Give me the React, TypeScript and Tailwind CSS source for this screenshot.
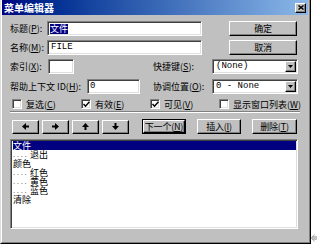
import React from "react";

const raised =
  "border border-t-white border-l-white border-r-black border-b-black shadow-[inset_-1px_-1px_#808080]";
const sunken =
  "border border-t-[#808080] border-l-[#808080] border-r-white border-b-white shadow-[inset_1px_1px_#404040,inset_-1px_-1px_#dfdfdf]";

const U = ({ c }: { c: string }) => <span className="underline underline-offset-1">{c}</span>;

function Check({ checked }: { checked: boolean }) {
  return (
    <div className={`w-[10px] h-[10px] bg-white ${sunken} flex items-center justify-center`}>
      {checked && (
        <svg width="7" height="7" viewBox="0 0 7 7">
          <path d="M0.5 3 L2.5 5.2 L6.5 0.8" stroke="#000" strokeWidth="1.5" fill="none" />
        </svg>
      )}
    </div>
  );
}

function Select({ value }: { value: string }) {
  return (
    <div className={`w-[86px] h-[15px] bg-white ${sunken} flex items-center pl-[3px]`}>
      <span className="flex-1 font-['Liberation_Mono',monospace] text-[9px] leading-[9px] text-black whitespace-pre">{value}</span>
      <div className={`w-[11px] h-[11px] mr-[1px] bg-[#c0c0c0] ${raised} flex items-center justify-center`}>
        <svg width="5" height="3" viewBox="0 0 5 3">
          <path d="M0 0 H5 L2.5 3 Z" fill="#000" />
        </svg>
      </div>
    </div>
  );
}

function Arrow({ dir }: { dir: "l" | "r" | "u" | "d" }) {
  const rot = { l: 180, r: 0, u: -90, d: 90 }[dir];
  return (
    <div className={`w-[27px] h-[14px] bg-[#c0c0c0] ${raised} flex items-center justify-center`}>
      <svg width="7" height="7" viewBox="0 0 7 7" style={{ transform: `rotate(${rot}deg)` }}>
        <path d="M0 2.5 H3 V0 L7 3.5 L3 7 V4.5 H0 Z" fill="#000" />
      </svg>
    </div>
  );
}

function Btn({ w, children, def }: { w: string; children: React.ReactNode; def?: boolean }) {
  const inner = (
    <div className={`h-full w-full bg-[#c0c0c0] ${raised} flex items-center justify-center text-[9px] leading-[9px] text-black whitespace-nowrap tracking-[-0.2px]`}>
      {children}
    </div>
  );
  return def ? <div className={`${w} h-[15px] border border-black`}>{inner}</div> : <div className={`${w} h-[15px]`}>{inner}</div>;
}

export default function App() {
  const rows: { t: string; child?: boolean; sel?: boolean }[] = [
    { t: "文件", sel: true },
    { t: "退出", child: true },
    { t: "颜色" },
    { t: "红色", child: true },
    { t: "黄色", child: true },
    { t: "蓝色", child: true },
    { t: "清除" },
  ];
  return (
    <div className="w-[317px] h-[245px] bg-white relative font-['Noto_Sans_CJK_SC','Liberation_Sans',sans-serif] text-black">
      <div className="w-[311px] h-[244px] bg-[#c0c0c0] border-l border-l-[#dfdfdf] border-r border-r-black border-b border-b-black">
        <div className="h-full flex flex-col border-l border-l-white border-r border-r-[#808080] border-b border-b-[#808080]">
          {/* title bar */}
          <div className="h-[15px] mr-[1px] bg-gradient-to-r from-[#000080] to-[#8cb8e8] flex items-center pl-[2px] pr-[2px]">
            <span className="flex-1 text-white font-bold text-[10px] leading-[10px]">菜单编辑器</span>
            <div className={`w-[11px] h-[10px] bg-[#c0c0c0] ${raised} flex items-center justify-center`}>
              <svg width="6" height="5" viewBox="0 0 6 5">
                <path d="M0.5 0.5 L5.5 4.5 M5.5 0.5 L0.5 4.5" stroke="#000" strokeWidth="1.4" />
              </svg>
            </div>
          </div>

          <div className="flex flex-col pl-[8px]">
            {/* row 1 */}
            <div className="flex items-center mt-[6px] h-[15px]">
              <span className="w-[37px] text-[9px] leading-[9px] whitespace-nowrap">标题(<U c="P" />):</span>
              <div className={`w-[155px] h-[15px] bg-white ${sunken} flex items-center pl-[2px]`}>
                <span className="bg-[#000080] text-white text-[9px] leading-[10px]">文件</span>
              </div>
              <div className="ml-[27px]">
                <Btn w="w-[68px]">确定</Btn>
              </div>
            </div>
            {/* row 2 */}
            <div className="flex items-center mt-[4px] h-[15px]">
              <span className="w-[37px] text-[9px] leading-[9px] whitespace-nowrap">名称(<U c="M" />):</span>
              <div className={`w-[155px] h-[15px] bg-white ${sunken} flex items-center pl-[3px]`}>
                <span className="font-['Liberation_Mono',monospace] text-[9px] leading-[9px]">FILE</span>
              </div>
              <div className="ml-[27px]">
                <Btn w="w-[68px]">取消</Btn>
              </div>
            </div>
            {/* row 3 */}
            <div className="flex items-center mt-[4px] h-[15px]">
              <span className="w-[38px] text-[9px] leading-[9px] whitespace-nowrap">索引(<U c="X" />):</span>
              <div className={`w-[26px] h-[15px] bg-white ${sunken}`} />
              <span className="ml-[79px] w-[59px] text-[9px] leading-[9px] whitespace-nowrap">快捷键(<U c="S" />):</span>
              <Select value="(None)" />
            </div>
            {/* row 4 */}
            <div className="flex items-center mt-[5px] h-[15px]">
              <span className="w-[77px] text-[9px] leading-[9px] whitespace-nowrap">帮助上下文 ID(<U c="H" />):</span>
              <div className={`w-[53px] h-[15px] bg-white ${sunken} flex items-center pl-[2px]`}>
                <span className="font-['Liberation_Mono',monospace] text-[9px] leading-[9px]">0</span>
              </div>
              <span className="ml-[13px] w-[59px] text-[9px] leading-[9px] whitespace-nowrap">协调位置(<U c="O" />):</span>
              <Select value="0 - None" />
            </div>
            {/* row 5 checkboxes */}
            <div className="flex items-center mt-[4px] h-[12px] pl-[2px]">
              <div className="w-[69px] flex items-center gap-[4px]">
                <Check checked={false} />
                <span className="text-[9px] leading-[9px] whitespace-nowrap">复选(<U c="C" />)</span>
              </div>
              <div className="w-[69px] flex items-center gap-[4px]">
                <Check checked />
                <span className="text-[9px] leading-[9px] whitespace-nowrap">有效(<U c="E" />)</span>
              </div>
              <div className="w-[69px] flex items-center gap-[4px]">
                <Check checked />
                <span className="text-[9px] leading-[9px] whitespace-nowrap">可见(<U c="V" />)</span>
              </div>
              <div className="flex items-center gap-[4px]">
                <Check checked={false} />
                <span className="text-[9px] leading-[9px] whitespace-nowrap">显示窗口列表(<U c="W" />)</span>
              </div>
            </div>
            {/* separator */}
            <div className="mt-[1px] w-[290px] h-[2px] border-t border-t-[#808080] border-b border-b-white" />
            {/* row 6 buttons */}
            <div className="flex items-center mt-[6px] h-[15px] pl-[2px]">
              <div className="flex gap-[3px]">
                <Arrow dir="l" />
                <Arrow dir="r" />
                <Arrow dir="u" />
                <Arrow dir="d" />
              </div>
              <div className="ml-[13px]">
                <Btn w="w-[44px]" def>
                  下一个(<U c="N" />)
                </Btn>
              </div>
              <div className="ml-[11px]">
                <Btn w="w-[44px]">
                  插入(<U c="I" />)
                </Btn>
              </div>
              <div className="ml-[11px]">
                <Btn w="w-[45px]">
                  删除(<U c="T" />)
                </Btn>
              </div>
            </div>
            {/* list */}
            <div className={`mt-[5px] w-[288px] h-[90px] bg-white ${sunken} pt-[1px] pl-[2px] pr-[1px] flex flex-col`}>
              {rows.map((r, i) => (
                <div
                  key={i}
                  className={`h-[9px] shrink-0 flex items-center overflow-visible text-[9px] leading-[9px] whitespace-nowrap ${
                    r.sel ? "bg-[#000080] text-white" : "text-black"
                  }`}
                >
                  {r.child && (
                    <span className="w-[17px] h-[9px] font-['Liberation_Sans',sans-serif] text-[8px] leading-[9px] tracking-[1.6px] text-[#404040]">
                      ....
                    </span>
                  )}
                  <span className="h-[9px] leading-[9px]">{r.t}</span>
                </div>
              ))}
            </div>
          </div>
        </div>
      </div>
      <svg className="absolute right-0 bottom-[3px]" width="6" height="8" viewBox="0 0 6 8">
        <path d="M3.5 0.5 L0.5 4 L3.5 7.5 M0.5 4 H6 M1.5 2.8 H6 M1.5 5.2 H6" stroke="#909090" strokeWidth="0.8" fill="none" />
      </svg>
    </div>
  );
}
